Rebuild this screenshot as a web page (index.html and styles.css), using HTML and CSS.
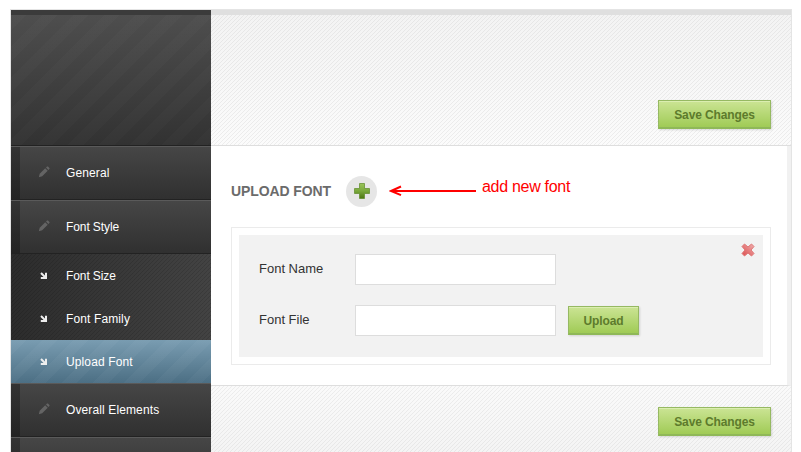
FILE: index.html
```html
<!DOCTYPE html>
<html lang="en">
<head>
<meta charset="utf-8">
<title>Font settings</title>
<link rel="stylesheet" href="styles.css">
</head>
<body>
<svg class="defs" width="0" height="0" aria-hidden="true">
  <symbol id="pencil" viewBox="0 0 12 12"><path d="M.8 11.200l.9-3.400L7.200 2.300l2.500 2.500L4.200 10.300zM8 1.600l1-1q.5-.4 1 0l1.400 1.400q.4.5 0 1l-1 1z" fill="#646464"/></symbol>
  <symbol id="arrow" viewBox="0 0 8 8"><path d="M1 1l4.500 4.500M6 .8V6H.8" fill="none" stroke="#eee" stroke-width="2"/></symbol>
</svg>
<div class="panel">
  <aside class="sidebar">
    <div class="brand"></div>
    <nav>
      <a class="item"><svg class="pencil"><use href="#pencil"/></svg>General</a>
      <a class="item tight"><svg class="pencil"><use href="#pencil"/></svg>Font Style</a>
      <div class="sub">
        <a class="subitem tight"><svg class="arrow"><use href="#arrow"/></svg>Font Size</a>
        <a class="subitem"><svg class="arrow"><use href="#arrow"/></svg>Font Family</a>
        <a class="subitem active"><svg class="arrow"><use href="#arrow"/></svg>Upload Font</a>
      </div>
      <a class="item"><svg class="pencil"><use href="#pencil"/></svg>Overall Elements</a>
      <a class="item"></a>
    </nav>
  </aside>
  <main class="main">
    <header class="bar top"><button class="btn save">Save Changes</button></header>
    <section class="content">
      <div class="heading">
        <h1>UPLOAD FONT</h1>
        <svg class="add" viewBox="0 0 31 31">
          <defs><linearGradient id="g" x2="0" y2="1"><stop stop-color="#9ac45b"/><stop offset=".5" stop-color="#79a83b"/><stop offset="1" stop-color="#4b7610"/></linearGradient></defs>
          <circle cx="15.500" cy="15.500" r="15.500" fill="#e6e6e6"/>
          <path d="M13.500 7.500h5v5h5v5h-5v5h-5v-5h-5v-5h5z" fill="url(#g)" stroke="#5e8a28" stroke-opacity=".7"/>
        </svg>
        <svg class="pointer" viewBox="0 0 88 12"><path d="M2 6h85M12 1.500L2 6l10 4.200" fill="none" stroke="#f00" stroke-width="2"/></svg>
        <span class="note">add new font</span>
      </div>
      <div class="frame">
        <form class="form">
          <div class="row"><label>Font Name</label><input type="text"></div>
          <div class="row"><label>Font File</label><input type="text"><button type="button" class="btn upload">Upload</button></div>
          <svg class="close" viewBox="0 0 14 14">
            <defs><linearGradient id="r" x1="1" x2="0" y2="1"><stop stop-color="#efb0b0"/><stop offset="1" stop-color="#dc4c4c"/></linearGradient></defs>
            <path d="M3.500 1L7 4l3.500-3L13 3.500 10 7l3 3.500-2.500 2.500L7 10l-3.500 3L1 10.500 4 7 1 3.500z" fill="url(#r)" stroke="#df7777"/>
          </svg>
        </form>
      </div>
    </section>
    <footer class="bar bottom"><button class="btn save">Save Changes</button></footer>
  </main>
</div>
</body>
</html>
```
FILE: styles.css
```css
* { box-sizing: border-box; }
body { margin: 0; height: 452px; overflow: hidden; background: #fff; font-family: "Liberation Sans", Arial, sans-serif; }
.defs { position: absolute; }
.panel { display: flex; width: 782px; height: 443px; margin: 9px 0 0 10px; border: 1px solid #e4e4e4; border-bottom: 0; overflow: hidden; }
.sidebar { flex: 0 0 200px; background: #333; }
.brand {
  height: 136px; border-top: 5px solid #3b3b3b; border-bottom: 1px solid #222;
  background: repeating-linear-gradient(135deg, #ffffff04 0 11px, #0000 11px 22px), linear-gradient(#4e4e4e, #323232);
}
.item, .subitem { display: flex; align-items: center; color: #fff; font-size: 12px; letter-spacing: .12px; }
.tight { letter-spacing: -.1px; }
.item {
  height: 54px; padding-left: 27px;
  border-top: 1px solid #5a5a5a; border-bottom: 1px solid #222;
  background: linear-gradient(90deg, #0004 9px, #0000 9px), linear-gradient(#464646, #303030);
}
.pencil { width: 12px; height: 12px; margin-right: 16px; position: relative; top: -1px; }
.sub { background: repeating-linear-gradient(135deg, #0002 0 1px, #0000 1px 2.83px), linear-gradient(90deg, #2c2c2c, #434343); }
.subitem { height: 43px; padding-left: 29px; }
.arrow { width: 8px; height: 8px; margin-right: 18px; }
.active { background: repeating-linear-gradient(135deg, #ffffff08 0 11px, #0000 11px 22px), linear-gradient(#799cb1, #4c6f84); }
.main { flex: 1; display: flex; flex-direction: column; }
.bar {
  display: flex; justify-content: flex-end; padding-right: 20px;
  background: repeating-linear-gradient(135deg, #0000000e 0 1px, #0000 1px 2.83px), linear-gradient(#f3f3f3, #fbfbfb);
}
.top { height: 136px; padding-top: 85px; border-top: 5px solid #dfdfdf; border-bottom: 1px solid #dedede; }
.bottom { flex: 1; padding-top: 21px; background: repeating-linear-gradient(135deg, #0000000e 0 1px, #0000 1px 2.83px), linear-gradient(#fafafa, #f4f4f4); }
.content { height: 240px; padding: 30px 16px 0 20px; border-right: 4px solid #f1f1f1; border-bottom: 1px solid #dedede; }
.heading { display: flex; align-items: center; height: 31px; }
h1 { width: 115px; margin: -2px 0 0; font-size: 14px; letter-spacing: -.1px; color: #6b6b6b; }
.add { width: 31px; height: 31px; }
.pointer { width: 88px; height: 12px; margin-left: 12px; position: relative; top: -1px; }
.note { margin: -10px 0 0 5px; color: #f00; font-size: 16px; letter-spacing: -.3px; }
.frame { height: 138px; margin-top: 20px; padding: 7px; border: 1px solid #ebebeb; }
.form { position: relative; height: 122px; padding: 19px 20px; background: #f2f2f2; }
.row { display: flex; align-items: flex-start; height: 51px; }
label { width: 96px; padding-top: 7px; font-size: 13px; color: #333; }
input { width: 201px; height: 31px; border: 1px solid #ddd; background: #fff; }
.btn {
  height: 29px; padding: 1px 0 0; border: 1px solid #96b962; border-bottom: 2px solid #8fb858;
  background: linear-gradient(#cbe494, #a0cb56); box-shadow: 1px 1px 2px #0002, inset 0 1px #dbeeb0;
  color: #5d7b2c; font: bold 12px "Liberation Sans", Arial, sans-serif; letter-spacing: -.12px;
}
.save { width: 113px; }
.upload { width: 71px; margin-left: 12px; margin-top: 1px; }
.close { position: absolute; right: 8px; top: 8px; width: 14px; height: 14px; }
```
